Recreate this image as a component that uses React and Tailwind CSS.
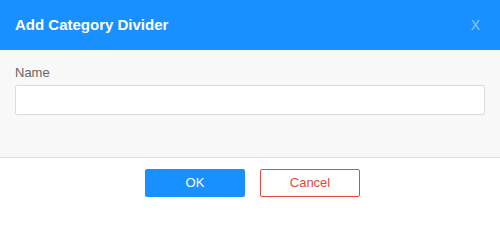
import React, { useState } from 'react';

const App = () => {
  const [name, setName] = useState('');

  return (
    <div className="w-[500px] h-[208px] bg-white flex flex-col font-['Liberation_Sans',Arial,sans-serif]">
      <div className="h-[50px] bg-[#1890ff] px-[15px] pr-[20px] flex items-center justify-between">
        <h3 className="text-[15px] leading-[20px] font-bold text-white">Add Category Divider</h3>
        <button type="button" className="text-[14px] leading-[20px] text-[#8cc6ff]">X</button>
      </div>
      <div className="bg-[#f8f8f8] px-[15px] pt-[14px] pb-[42px] border-b border-[#e0e0e0]">
        <label className="block text-[13px] leading-[18px] text-[#666] mb-[3px]">Name</label>
        <input
          type="text"
          className="w-full h-[30px] bg-white border border-[#dcdcdc] rounded-[2px] px-2 text-[13px] outline-none"
          value={name}
          onChange={e => setName(e.target.value)}
        />
      </div>
      <div className="flex justify-center gap-[15px] pt-[11px] pl-[5px]">
        <button type="button" className="w-[100px] h-[28px] bg-[#1890ff] text-white text-[13px] rounded-[2px]">OK</button>
        <button type="button" className="w-[100px] h-[28px] bg-white border border-[#e5483d] text-[#e5483d] text-[13px] rounded-[2px]">Cancel</button>
      </div>
    </div>
  );
};

export default App;
